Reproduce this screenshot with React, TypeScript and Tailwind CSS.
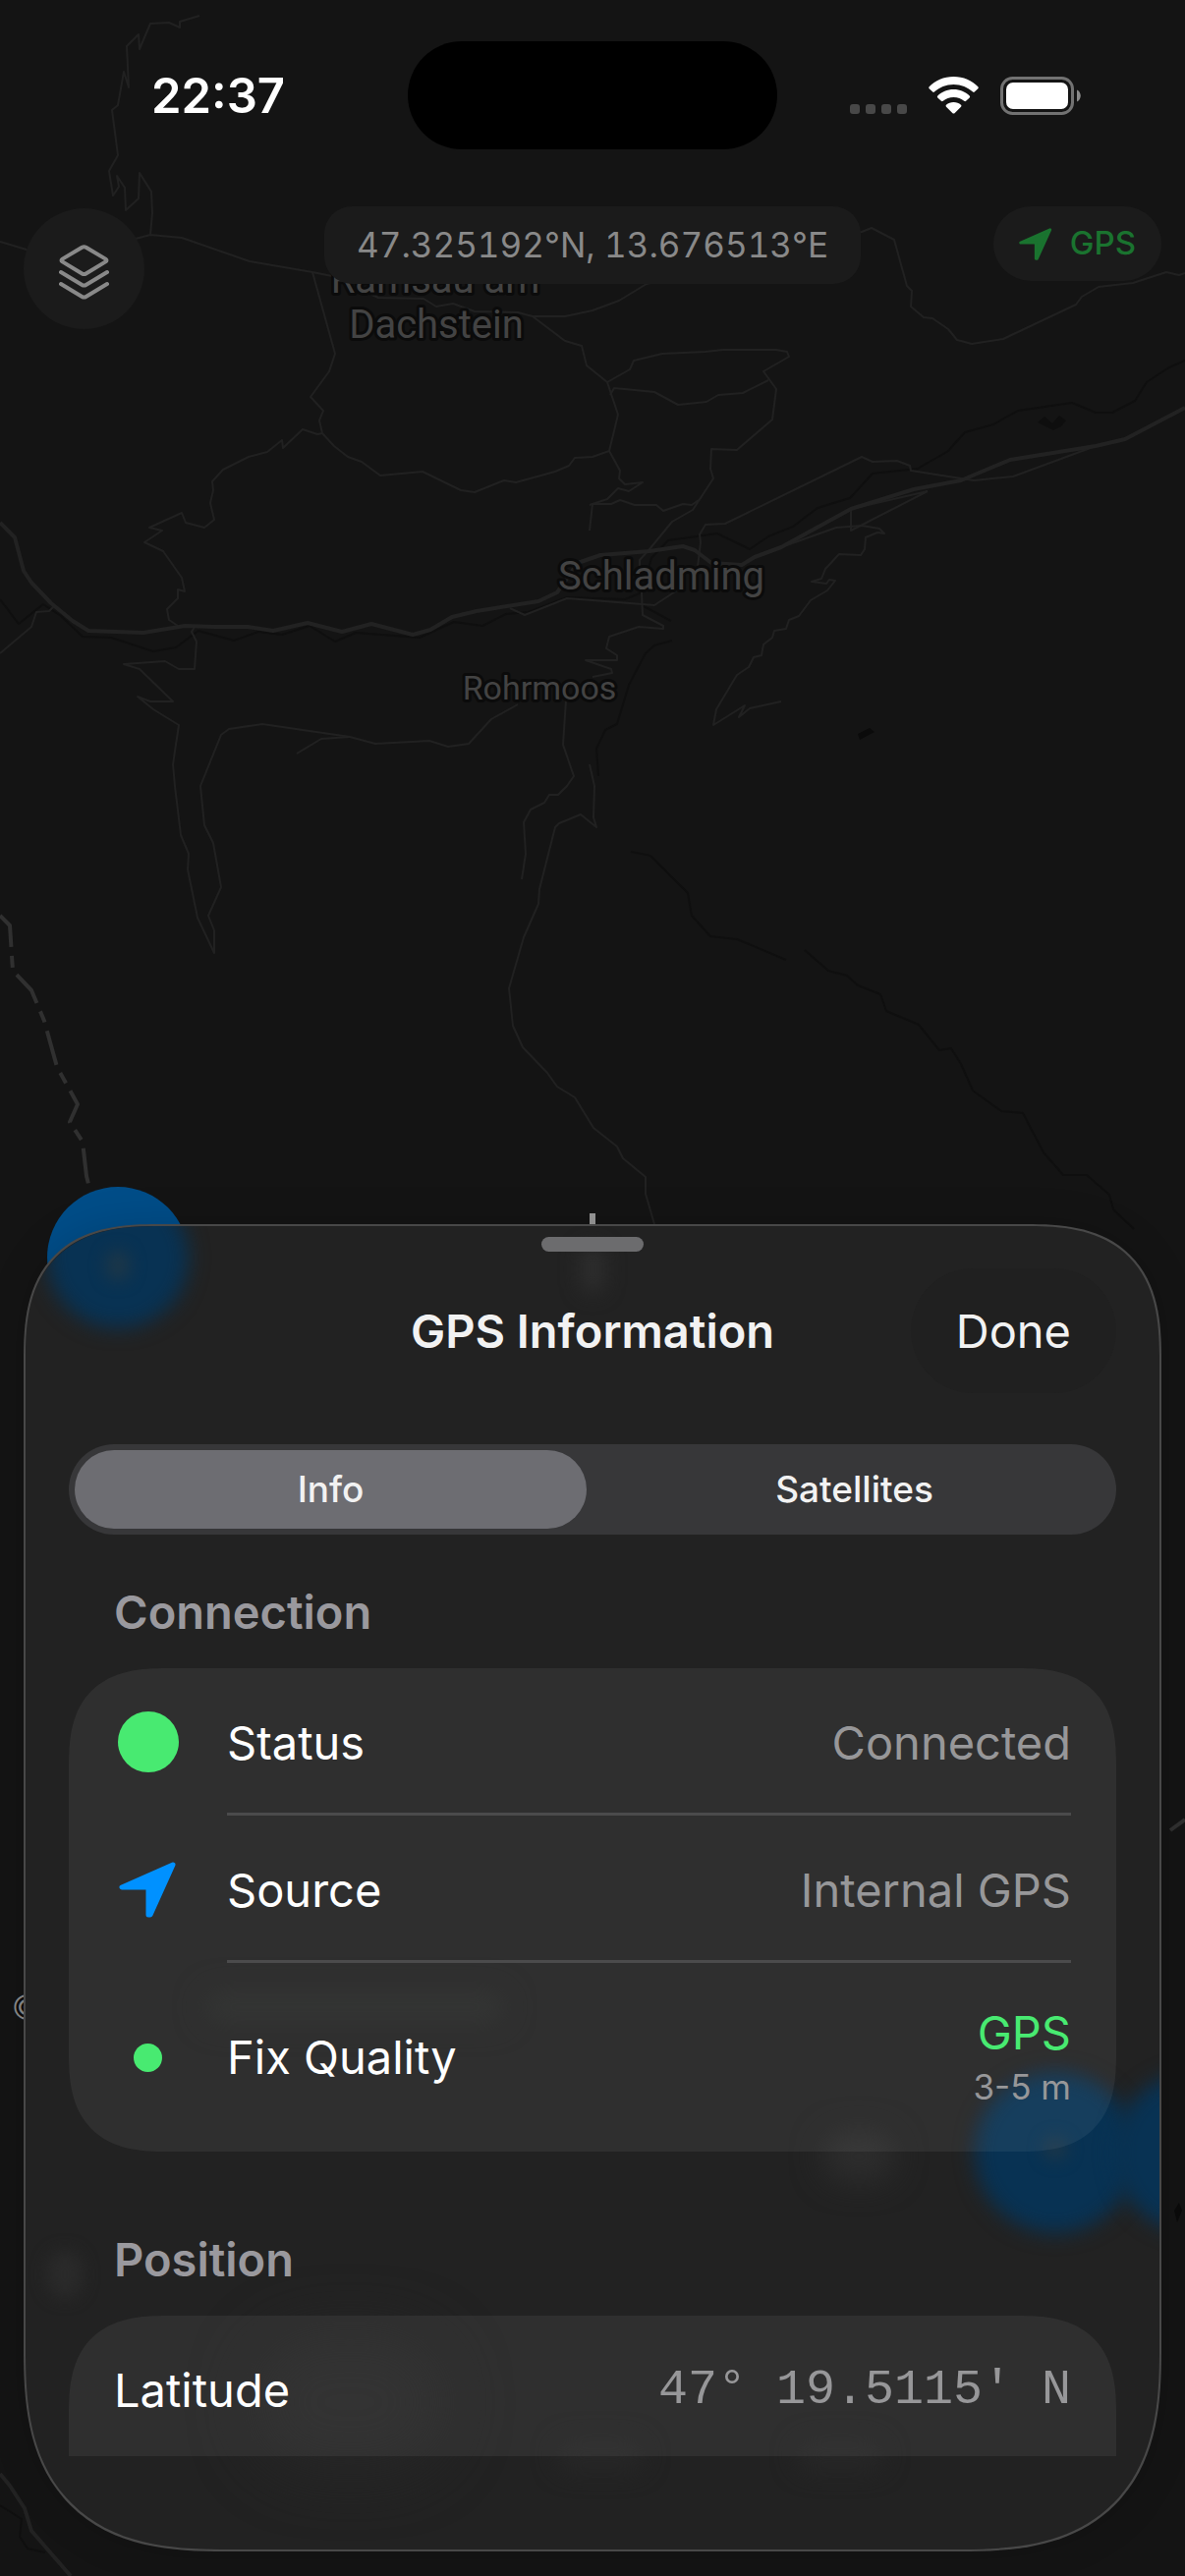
import React, { useState } from 'react';

type Tab = 'Info' | 'Satellites';

interface RowProps {
  icon?: React.ReactNode;
  label: string;
  children: React.ReactNode;
  separator?: boolean;
}

const TABS: Tab[] = ['Info', 'Satellites'];

// Minor roads and tracks
const ROADS: string[] = [
  '203,16 183,22 183,28 172,23 153,24 142,50 141,35 129,47 131,89 126,73 120,107 114,112 120,158 111,174 115,199 121,190 119,179 127,191 128,214 141,202 142,176 154,195 155,217 153,239',
  '0,246 27,254 90,258 138,243 153,239 185,242 254,266 318,277 338,281 385,303 431,304 444,312 461,309 483,317 527,318 542,322 575,322 603,316 630,306 658,289 760,262 877,236 887,232 910,244 923,291 928,296 927,312 940,323 949,324 965,335 974,346 989,350 1021,345 1095,310 1101,302 1118,292 1153,288 1187,277 1200,280 1206,278',
  '318,277 341,360 335,378 316,404 329,418 325,428 328,441 340,454 354,465 368,470 387,484 430,480 469,499 483,501 513,489 525,491 565,480 579,474 585,466 603,465 620,459',
  '328,441 323,442 308,437 288,456 287,448 272,460 253,465 227,478 216,490 217,499 214,512 218,529 208,537 189,532 185,522 152,537 165,540 147,552 166,561 185,588 188,602 181,600 181,609 170,620 172,631 181,637',
  '542,322 575,347 592,352 597,372 618,389 629,422 620,459 631,479 630,487 636,493 654,491 640,500 629,497 618,508 600,514',
  '618,389 641,376 645,367 674,360 718,358 736,356 790,356 801,358 803,363 777,378 790,396 786,427 750,458 724,457 723,477 726,487 705,519 684,531 661,559 651,570 651,580',
  '621,402 625,395 666,399 690,412 719,409 731,402 756,400 782,387',
  '600,540 603,513 622,513 631,509 646,514 668,514 675,520 695,513 704,514 711,509',
  '710,577 713,552 712,544 718,534 738,533 877,465 888,470 913,469 926,474 927,479 991,489 1031,485 1115,454',
  '944,500 866,540 866,518 944,500',
  '795,557 851,537 877,535 895,538 900,543 893,542 881,547 880,559 876,565 854,564 840,579 836,589 826,592 841,594 844,590 850,591 842,601 825,611 813,627 803,631 800,640 788,642 786,649 777,656 775,667 767,669 762,679 750,687 729,722 726,738 758,718 752,730 763,721 795,714',
  '519,619 534,626 577,609 603,611 666,616 695,597',
  '653,603 654,626 675,637 675,640 650,638 620,648 617,660 628,667 628,672 596,672 622,681 623,685 603,689',
  '198,638 195,643 200,653 198,681 182,681 168,673 126,676 142,681 176,714 153,714 140,709 156,722 182,738 176,778 178,800 184,850 192,869 191,885 201,934 218,970 218,947 212,932 225,903 217,858 208,840 204,800 225,748 233,742 267,737 356,750 382,757 437,754 456,760 477,757 500,732 527,717',
  '302,767 327,752 356,750',
  '0,665 32,638 37,623 50,622 55,617',
  '576,713 573,758 584,790 577,800 568,809 559,809 554,817 540,824 533,837 535,869 531,895',
  '600,778 605,800 604,832 607,842 591,829 569,838 565,842 549,905 548,920 533,954 518,1006 522,1044 532,1066 557,1092 567,1106 585,1117 604,1148 628,1167 634,1179 657,1198 657,1215 666,1246',
];

const MAIN_ROAD =
  '0,532 15,547 24,581 32,593 52,614 74,632 90,642 146,644 188,637 219,638 252,638 278,642 313,634 348,643 378,635 420,646 438,641 460,628 485,622 548,612 567,603 588,573 611,565 661,561 695,556 707,560 724,573 755,575 768,567 795,557 866,518 930,498 978,489 1028,468 1115,454 1145,447 1206,415';

const RIVERS: string[] = [
  '0,610 19,635 44,615 62,627 84,648 113,649 156,663 179,659 202,642 238,652 263,643 287,646 315,637 341,653 362,644 427,649 462,633 491,637 515,625 538,623 577,608 636,610 653,603 663,568 680,550 730,543 763,559 782,546 807,536 832,517 865,507 888,482 934,477 965,459 982,440 1011,432 1036,418 1091,410 1115,420 1132,420 1155,408 1167,389 1188,375 1206,367',
  '653,616 683,632',
  '684,652 666,657 657,665 640,697 628,737 616,743 607,762 609,790',
  '642,867 662,871 700,909 704,932 723,953 750,956 800,977',
  '819,967 843,988 862,993 873,1003 896,1012 902,1029 935,1043 956,1069 968,1067 978,1083 990,1110 1019,1131 1041,1133 1062,1173 1082,1196 1106,1196 1129,1216 1133,1231 1154,1251',
];

const MapBackground: React.FC = () => (
  <svg
    aria-hidden="true"
    viewBox="0 0 1206 2622"
    preserveAspectRatio="xMidYMin slice"
    className="absolute inset-0 h-full w-full"
    fill="none"
    strokeLinejoin="round"
  >
    <g stroke="#0f0f0f" strokeWidth="2">
      {RIVERS.map((points) => (
        <polyline key={points} points={points} />
      ))}
      <path d="M0 2550 22 2564 20 2582 28 2594 46 2598" />
    </g>
    <g stroke="#212121" strokeWidth="2">
      {ROADS.map((points) => (
        <polyline key={points} points={points} />
      ))}
    </g>
    <polyline points={MAIN_ROAD} stroke="#222222" strokeWidth="4" />
    <path d="M0 2518 10 2530 25 2553 32 2576 72 2622" stroke="#222222" strokeWidth="4" />
    <path d="M1191 1863 1206 1852" stroke="#303030" strokeWidth="4" />
    <polyline
      points="0,932 10,942 13,988 32,1008 45,1039 58,1086 79,1124 71,1142 84,1162 88,1197 92,1213"
      stroke="#303030"
      strokeWidth="4"
      strokeDasharray="36 9 12 9"
    />
    <path d="M1056 430 1063 424 1071 431 1078 423 1085 428 1080 434 1072 438Z" fill="#0e0e0e" />
    <path d="M873 747 885 741 890 745 875 753Z" fill="#0b0b0b" />
    <path d="M1195 2250 1200 2242 1203 2250 1198 2262Z" fill="#0b0b0b" />

    <circle cx="120" cy="1280" r="72" fill="#004d88" />
    <path d="M600 1235H606V1260H600Z" fill="#999999" />

    <g
      className="font-[Roboto,sans-serif]"
      fill="#434343"
      stroke="#0b0b0b"
      strokeWidth="6"
      textAnchor="middle"
      style={{ paintOrder: 'stroke' }}
    >
      <text x="443" y="298" fontSize="40">Ramsau am</text>
      <text x="444" y="344" fontSize="40">Dachstein</text>
      <text x="673" y="600" fontSize="40">Schladming</text>
      <text x="549" y="712" fontSize="34">Rohrmoos</text>
    </g>
    <text x="14" y="2054" fontSize="30" fill="#0b0b0b" stroke="#8c8c8c" strokeWidth="4" style={{ paintOrder: 'stroke' }} className="font-[Inter,sans-serif]">
      ©
    </text>
  </svg>
);

const LocationArrow: React.FC<{ className?: string }> = ({ className }) => (
  <svg viewBox="0 0 59 57" className={className} fill="currentColor" stroke="currentColor" strokeWidth="5" strokeLinejoin="round" aria-hidden="true">
    <path d="M55 3 3 26H30V54H32Z" />
  </svg>
);

const LayersIcon: React.FC = () => (
  <svg viewBox="0 0 51 56" className="mt-1.5 h-14 w-[51px]" fill="none" stroke="currentColor" strokeWidth="4" strokeLinecap="round" strokeLinejoin="round" aria-hidden="true">
    <path d="M23.5 2.8Q25.5 1.8 27.5 2.8L47.5 14.6Q49.5 16 47.5 17.4L27.5 29.5Q25.5 30.7 23.5 29.5L3.5 17.4Q1.5 16 3.5 14.6Z" />
    <path d="M2 28 23.5 41Q25.5 42.2 27.5 41L49 28" />
    <path d="M2 40 23.5 53Q25.5 54.2 27.5 53L49 40" />
  </svg>
);

const StatusBar: React.FC = () => (
  <header className="grid h-[110px] grid-cols-[1fr_376px_1fr] items-center">
    <div className="pt-0.5 pl-[154px] text-[49px] font-semibold text-white">22:37</div>
    <div className="h-full rounded-full bg-black" />
    <div className="flex items-center justify-end pr-[106px]">
      <div className="mt-7 mr-[22px] flex gap-1.5">
        <span className="size-2.5 rounded-[3px] bg-[#484848]" />
        <span className="size-2.5 rounded-[3px] bg-[#484848]" />
        <span className="size-2.5 rounded-[3px] bg-[#484848]" />
        <span className="size-2.5 rounded-[3px] bg-[#484848]" />
      </div>
      <svg viewBox="0 0 51 38" className="mr-[22px] h-[38px] w-[51px]" fill="#fff" aria-label="Wi-Fi">
        <path d="M25.500 0C35.500 0 44.200 4 50.300 10.200Q51.200 11.200 50.300 12.200L46.800 15.600Q46 16.400 45.100 15.600C40 10.800 33.200 7.900 25.500 7.900S11 10.800 5.900 15.600Q5 16.400 4.200 15.600L.7 12.200Q-.2 11.200 .7 10.200C6.800 4 15.500 0 25.500 0Z" />
        <path d="M25.500 13C31.900 13 37.600 15.500 41.700 19.400Q42.700 20.400 41.700 21.400L38.100 24.800Q37.200 25.700 36.200 24.800C33.400 22.400 29.700 20.900 25.500 20.900S17.600 22.400 14.800 24.800Q13.800 25.700 12.900 24.800L9.300 21.400Q8.300 20.400 9.300 19.400C13.400 15.500 19.100 13 25.500 13Z" />
        <path d="M25.500 26C28.400 26 31 27 33 28.700Q34 29.700 33 30.700L26.500 37.200Q25.500 38 24.500 37.200L18 30.700Q17 29.700 18 28.700C20 27 22.600 26 25.500 26Z" />
      </svg>
      <svg viewBox="0 0 82 39" className="h-[39px] w-[82px]" aria-label="Battery">
        <rect x="1.500" y="1.500" width="72" height="36" rx="11" fill="none" stroke="#727272" strokeWidth="3" />
        <rect x="6" y="6" width="63" height="27" rx="7" fill="#fff" />
        <path d="M78 13.500C83 15.500 83 23.500 78 25.500Z" fill="#8a8a8a" />
      </svg>
    </div>
  </header>
);

const Row: React.FC<RowProps> = ({ icon, label, children, separator = true }) => (
  <div className="flex min-h-[150px] items-stretch px-[46px]">
    {icon && <div className="mr-[46px] flex w-[69px] items-center justify-center">{icon}</div>}
    <div className={`flex flex-1 items-center justify-between ${separator ? 'border-b-3 border-[#4b4b4c] pt-1' : ''}`}>
      <span>{label}</span>
      <span className="flex flex-col items-end text-[#979799]">{children}</span>
    </div>
  </div>
);

// Soft shapes showing through the sheet from the map below
const SheetGlow: React.FC = () => (
  <div aria-hidden="true" className="pointer-events-none absolute inset-0 -z-10 overflow-hidden rounded-[inherit] [corner-shape:inherit]">
    <div className="absolute top-[-40px] left-[22px] size-[144px] rounded-full bg-[#083253] blur-[10px]" />
    <div className="absolute top-6 left-[82px] h-8 w-6 rounded-full bg-[#1c3648] blur-[8px]" />
    <div className="absolute top-5 left-1/2 h-12 w-6 -translate-x-1/2 rounded-full bg-[#2e2e2e] blur-[10px]" />
    <div className="absolute right-6 bottom-[322px] size-[164px] rounded-full bg-[#083253] blur-[10px]" />
    <div className="absolute right-[-118px] bottom-[322px] size-[164px] rounded-full bg-[#083253] blur-[10px]" />
    <div className="absolute right-[94px] bottom-[396px] size-6 rounded-full bg-[#1c3648] blur-[8px]" />
    <div className="absolute right-[270px] bottom-[376px] h-12 w-18 rounded-full bg-[#2e2e2e] blur-[16px]" />
    <div className="absolute bottom-[534px] left-[180px] h-9 w-[310px] rounded-full bg-[#282928] blur-[14px]" />
    <div className="absolute bottom-[256px] left-[22px] h-12 w-9 rounded-full bg-[#2a2a2a] blur-[8px]" />
    <div className="absolute bottom-[80px] left-[230px] h-[140px] w-[200px] rounded-full bg-[#272727] blur-[30px]" />
    <div className="absolute bottom-[80px] left-[540px] h-8 w-[90px] rounded-full bg-[#272727] blur-[12px]" />
    <div className="absolute right-[280px] bottom-[80px] h-8 w-[90px] rounded-full bg-[#272727] blur-[12px]" />
  </div>
);

const App: React.FC = () => {
  const [tab, setTab] = useState<Tab>('Info');

  return (
    <div className="relative isolate flex min-h-screen flex-col overflow-hidden bg-[#141414] pt-[42px] pb-[25px] font-[Inter,'Noto_Sans',sans-serif]">
      <MapBackground />

      <div className="relative flex flex-1 flex-col">
        <StatusBar />

        <div className="mt-[58px] grid grid-cols-[1fr_auto_1fr] items-start px-6">
          <button
            type="button"
            aria-label="Map layers"
            className="mt-0.5 flex size-[123px] items-center justify-center rounded-full bg-[#1b1b1b] text-[#898989]"
          >
            <LayersIcon />
          </button>
          <div className="flex h-[79px] items-center rounded-[28px] bg-[#1b1b1b] px-[33px] text-[35px] text-[#898989] tabular-nums">
            47.325192°N, 13.676513°E
          </div>
          <div className="flex h-[76px] items-center gap-[18px] justify-self-end rounded-full bg-[#1b1b1b] px-[26px] text-[33px] font-medium text-[#1a732f]">
            <LocationArrow className="h-[35px] w-[34px]" />
            GPS
          </div>
        </div>

        <section className="relative isolate mx-6 mt-auto rounded-t-[112px] rounded-b-[162px] border-2 border-[#484848] bg-[#222222] px-11 pb-[95px] text-[47px] leading-[60px] text-white shadow-[0_0_40px_rgba(0,0,0,0.15)] supports-[corner-shape:squircle]:rounded-t-[137px] supports-[corner-shape:squircle]:rounded-b-[205px] supports-[corner-shape:squircle]:[corner-shape:superellipse(1.4)]">
          <SheetGlow />
          <div className="mx-auto mt-[11px] h-[15px] w-[104px] rounded-full bg-[#6c6c6e]" />

          <div className="mt-[17px] grid h-[127px] grid-cols-[1fr_auto_1fr] items-center text-[#f2f2f2]">
            <h1 className="col-start-2 font-semibold">GPS Information</h1>
            <button type="button" className="h-full justify-self-end rounded-full bg-[#202020] px-[46px]">
              Done
            </button>
          </div>

          <div role="tablist" className="mt-[52px] grid h-[92px] grid-cols-2 gap-3 rounded-full bg-[#373739] p-1.5 text-[37px] font-medium text-[#f2f2f2]">
            {TABS.map((name) => (
              <button
                key={name}
                type="button"
                role="tab"
                aria-selected={tab === name}
                onClick={() => setTab(name)}
                className={`rounded-full ${tab === name ? 'bg-[#6d6d72]' : ''}`}
              >
                {name}
              </button>
            ))}
          </div>

          <h2 className="mt-[49px] pl-[46px] font-semibold text-[#9a999e]">Connection</h2>
          <div className="mt-[27px] rounded-[80px] bg-white/6 supports-[corner-shape:squircle]:rounded-[100px] supports-[corner-shape:squircle]:[corner-shape:superellipse(1.4)]">
            <Row label="Status" icon={<span className="size-[62px] rounded-full bg-[#48ea71]" />}>
              Connected
            </Row>
            <Row label="Source" icon={<LocationArrow className="h-[57px] w-[59px] text-[#0091ff]" />}>
              Internal GPS
            </Row>
            <div className="flex h-[192px] flex-col justify-center">
              <Row label="Fix Quality" separator={false} icon={<span className="size-[29px] rounded-full bg-[#48ea71]" />}>
                <span className="text-[#48ea71]">GPS</span>
                <span className="text-[35px] leading-[50px]">3-5 m</span>
              </Row>
            </div>
          </div>

          <h2 className="mt-20 pl-[46px] font-semibold text-[#9a999e]">Position</h2>
          <div className="mt-[27px] h-[143px] overflow-hidden rounded-t-[80px] bg-white/6 supports-[corner-shape:squircle]:rounded-t-[100px] supports-[corner-shape:squircle]:[corner-shape:superellipse(1.4)]">
            <Row label="Latitude">
              <span className="font-['Liberation_Mono',monospace] text-[50px]">47° 19.5115' N</span>
            </Row>
          </div>
        </section>
      </div>
    </div>
  );
};

export default App;
